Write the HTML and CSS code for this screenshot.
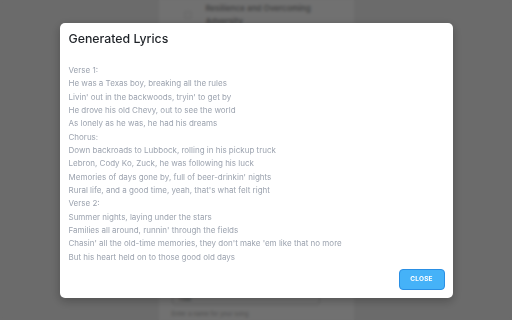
FILE: index.html
```html
<!DOCTYPE html>
<html lang="en">
<head>
    <meta charset="UTF-8">
    <meta name="viewport" content="width=device-width, initial-scale=1.0">
    <title>Generated Lyrics</title>
    <link rel="stylesheet" href="styles.css">
</head>
<body>
    <div class="page">
        <div class="column">
            <div class="topic">
                <span class="topic-icon"></span>
                <span class="topic-text">Resilience and Overcoming Adversity</span>
            </div>
            <div class="spacer"></div>
            <div class="field">Title</div>
            <div class="hint">Enter a name for your song</div>
        </div>
    </div>

    <div class="overlay">
        <div class="modal">
            <div class="modal-header">
                <h2>Generated Lyrics</h2>
            </div>
            <div class="modal-body">
                <div class="lyrics">Verse 1:
He was a Texas boy, breaking all the rules
Livin' out in the backwoods, tryin' to get by
He drove his old Chevy, out to see the world
As lonely as he was, he had his dreams
Chorus:
Down backroads to Lubbock, rolling in his pickup truck
Lebron, Cody Ko, Zuck, he was following his luck
Memories of days gone by, full of beer-drinkin' nights
Rural life, and a good time, yeah, that's what felt right
Verse 2:
Summer nights, laying under the stars
Families all around, runnin' through the fields
Chasin' all the old-time memories, they don't make 'em like that no more
But his heart held on to those good old days</div>
            </div>
            <div class="modal-footer">
                <button class="close-btn">Close</button>
            </div>
        </div>
    </div>
</body>
</html>
```

FILE: styles.css
```css
* {
    margin: 0;
    padding: 0;
    box-sizing: border-box;
    font-family: 'Inter', 'Noto Sans', sans-serif;
}

body {
    width: 512px;
    height: 320px;
    overflow: hidden;
    background: #d6d6d6;
}

.page {
    display: flex;
    justify-content: center;
    height: 100%;
}

.column {
    width: 195px;
    height: 100%;
    background: #e2e2e2;
    display: flex;
    flex-direction: column;
    padding: 2px 13px 0 13px;
}

.topic {
    display: flex;
    align-items: center;
    gap: 14px;
    padding-left: 12px;
}

.topic-icon {
    width: 8px;
    height: 8px;
    border-radius: 50%;
    border: 1px solid #c9c9c9;
}

.topic-text {
    width: 130px;
    font-size: 8px;
    font-weight: 600;
    line-height: 13px;
    color: #8a8a8a;
}

.spacer {
    flex: 1;
}

.field {
    width: 148px;
    height: 14px;
    border: 1px solid #c4c4c4;
    border-radius: 3px;
    font-size: 6px;
    font-weight: 600;
    color: #8a8a8a;
    padding: 3px 6px;
    margin-bottom: 5px;
}

.hint {
    font-size: 6px;
    color: #9a9a9a;
    height: 10px;
}

.overlay {
    position: fixed;
    inset: 0;
    background: rgba(0, 0, 0, 0.5);
    backdrop-filter: blur(1.5px);
    display: flex;
    align-items: center;
    justify-content: center;
}

.modal {
    width: 393px;
    height: 275px;
    background: white;
    border-radius: 5px;
    box-shadow: 0 3px 10px rgba(0, 0, 0, 0.25);
    display: flex;
    flex-direction: column;
}

.modal-header {
    padding: 6px 9px 0 9px;
}

.modal-header h2 {
    font-size: 12.3px;
    font-weight: 500;
    line-height: 20px;
    color: #1f2328;
}

.modal-body {
    flex: 1;
    padding: 15.5px 9px 0 9px;
}

.lyrics {
    white-space: pre-line;
    font-size: 8px;
    line-height: 13.33px;
    color: #9ca3af;
}

.modal-footer {
    display: flex;
    justify-content: flex-end;
    padding: 0 8px 8px 0;
}

.close-btn {
    width: 46px;
    height: 21px;
    background: #45b2f8;
    border: 1px solid #2a8fe4;
    border-radius: 4px;
    color: white;
    font-size: 6.5px;
    font-weight: 700;
    text-transform: uppercase;
    letter-spacing: 0.2px;
    cursor: pointer;
}
```
